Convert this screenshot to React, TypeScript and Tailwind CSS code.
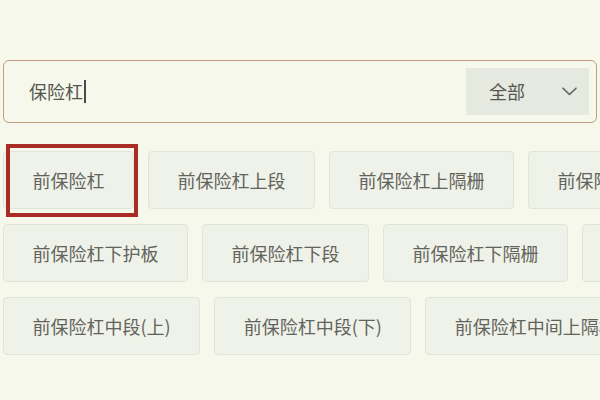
import React from 'react';

const rows: string[][] = [
  ['前保险杠', '前保险杠上段', '前保险杠上隔栅', '前保险杠支架'],
  ['前保险杠下护板', '前保险杠下段', '前保险杠下隔栅', '前保险杠骨架'],
  ['前保险杠中段(上)', '前保险杠中段(下)', '前保险杠中间上隔栅'],
];

const Chip = ({ label, selected }: { label: string; selected?: boolean }) => (
  <div className="relative flex h-[58px] shrink-0 items-center whitespace-nowrap rounded-[4px] border border-[#e0e4d9] bg-[#eff2e8] px-[28.5px] text-[18px] text-[#63635d]">
    {label}
    {selected && (
      <div className="pointer-events-none absolute top-[-8px] right-[-5px] bottom-[-9px] left-[2px] border-[4px] border-[#a92c27]" />
    )}
  </div>
);

export default function App() {
  return (
    <div
      className="h-[400px] w-[600px] overflow-hidden bg-[#f5f8ea] pt-[60px] pl-[3px]"
      style={{ fontFamily: '"Noto Sans CJK SC", "Noto Sans", sans-serif' }}
    >
      <div className="flex h-[63px] w-[594px] items-center justify-between rounded-[6px] border-[1.5px] border-[#c49a82] pr-[7px] pl-[25px]">
        <div className="flex items-center text-[18px] text-[#55554f]">
          <span>保险杠</span>
          <span className="ml-[1px] h-[23px] w-[1.5px] bg-[#4a4a46]" />
        </div>
        <div className="flex h-[47px] w-[123px] items-center justify-between bg-[#e5e9e0] pr-[12px] pl-[23px] text-[18px] text-[#55574f]">
          <span>全部</span>
          <svg width="15" height="9" viewBox="0 0 15 9" fill="none">
            <path d="M1 1.2 7.5 7.5 14 1.2" stroke="#5f615a" strokeWidth="1.6" strokeLinecap="round" strokeLinejoin="round" />
          </svg>
        </div>
      </div>

      <div className="mt-[28px] flex flex-col gap-[15px]">
        {rows.map((row, i) => (
          <div key={i} className="flex gap-[14px]">
            {row.map((label, j) => (
              <Chip key={label} label={label} selected={i === 0 && j === 0} />
            ))}
          </div>
        ))}
      </div>
    </div>
  );
}
